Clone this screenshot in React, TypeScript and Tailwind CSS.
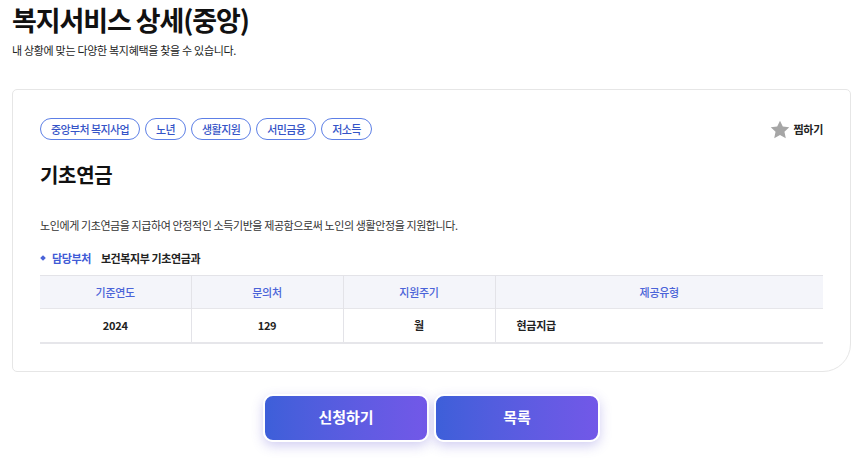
import React from "react";

const font = { fontFamily: '"Noto Sans CJK KR", "Noto Sans", sans-serif' };

function Tag({ children }: { children: React.ReactNode }) {
  return (
    <span className="inline-flex h-[22px] items-center rounded-full border border-[#5d7fe6] px-[10px] text-[11px] font-medium leading-none tracking-[-0.6px] text-[#3554c7]">
      {children}
    </span>
  );
}

export default function App() {
  const tags = ["중앙부처 복지사업", "노년", "생활지원", "서민금융", "저소득"];
  return (
    <div className="min-h-[469px] bg-white px-[12px] pr-[13px] text-[#111]" style={font}>
      <h1 className="pt-[1px] text-[27px] font-bold leading-[38px] tracking-[-1.1px] text-[#111]">
        복지서비스 상세(중앙)
      </h1>
      <p className="mt-[3px] text-[11px] leading-[16px] tracking-[-0.3px] text-[#222]">내 상황에 맞는 다양한 복지혜택을 찾을 수 있습니다.</p>

      <div className="mt-[31px] rounded-[5px] rounded-br-[28px] border border-[#e6e6e6] bg-white px-[27px] pb-[27px] pt-[28px]">
        <div className="flex items-center justify-between">
          <div className="flex gap-[5px]">
            {tags.map((t) => (
              <Tag key={t}>{t}</Tag>
            ))}
          </div>
          <div className="flex items-center gap-[4px] text-[11px] font-bold tracking-[-0.3px] text-[#222]">
            <svg width="20" height="19" viewBox="0 0 24 23">
              <path d="M12 0.8l3.4 7.2 7.8 0.9-5.8 5.4 1.6 7.8L12 18.2l-7 3.9 1.6-7.8L0.8 8.9l7.8-0.9z" fill="#a6a6a6" />
            </svg>
            <span>찜하기</span>
          </div>
        </div>

        <h2 className="mt-[21px] text-[20px] font-bold leading-[28px] tracking-[-0.3px] text-[#111]">기초연금</h2>

        <p className="mt-[27px] text-[11px] leading-[18px] tracking-[-0.4px] text-[#333]">
          노인에게 기초연금을 지급하여 안정적인 소득기반을 제공함으로써 노인의 생활안정을 지원합니다.
        </p>

        <div className="mt-[15px] flex items-center text-[11px] font-bold leading-[18px] tracking-[-0.4px]">
          <span className="ml-[1px] mr-[7px] inline-block h-[4px] w-[4px] rotate-45 bg-[#4a63d8]" />
          <span className="text-[#3f5bd6]">담당부처</span>
          <span className="ml-[10px] text-[#222]">보건복지부 기초연금과</span>
        </div>

        <table className="mt-[8px] w-full border-collapse text-[11px] tracking-[-0.3px]">
          <thead>
            <tr className="h-[33px] border-t border-[#e3e3e8] bg-[#f4f5fa]">
              <th className="w-[151px] border-r border-[#e3e3e8] font-medium text-[#4a63d8]">기준연도</th>
              <th className="w-[152px] border-r border-[#e3e3e8] font-medium text-[#4a63d8]">문의처</th>
              <th className="w-[152px] border-r border-[#e3e3e8] font-medium text-[#4a63d8]">지원주기</th>
              <th className="font-medium text-[#4a63d8]">제공유형</th>
            </tr>
          </thead>
          <tbody>
            <tr className="h-[34px] border-b-2 border-t border-[#e6e6ea]">
              <td className="border-r border-[#e3e3e8] text-center font-bold text-[#222]">2024</td>
              <td className="border-r border-[#e3e3e8] text-center font-bold text-[#222]">129</td>
              <td className="border-r border-[#e3e3e8] text-center font-bold text-[#222]">월</td>
              <td className="pl-[21px] text-left font-bold text-[#222]">현금지급</td>
            </tr>
          </tbody>
        </table>
      </div>

      <div className="mt-[22px] flex justify-center gap-[5px]">
        <button className="h-[48px] w-[166px] rounded-[10px] border-2 border-white bg-gradient-to-r from-[#3d5fd9] to-[#7258e8] text-[15px] font-bold text-white shadow-[0_4px_12px_rgba(90,80,210,0.28)]">
          신청하기
        </button>
        <button className="h-[48px] w-[166px] rounded-[10px] border-2 border-white bg-gradient-to-r from-[#3d5fd9] to-[#7258e8] text-[15px] font-bold text-white shadow-[0_4px_12px_rgba(90,80,210,0.28)]">
          목록
        </button>
      </div>
    </div>
  );
}
